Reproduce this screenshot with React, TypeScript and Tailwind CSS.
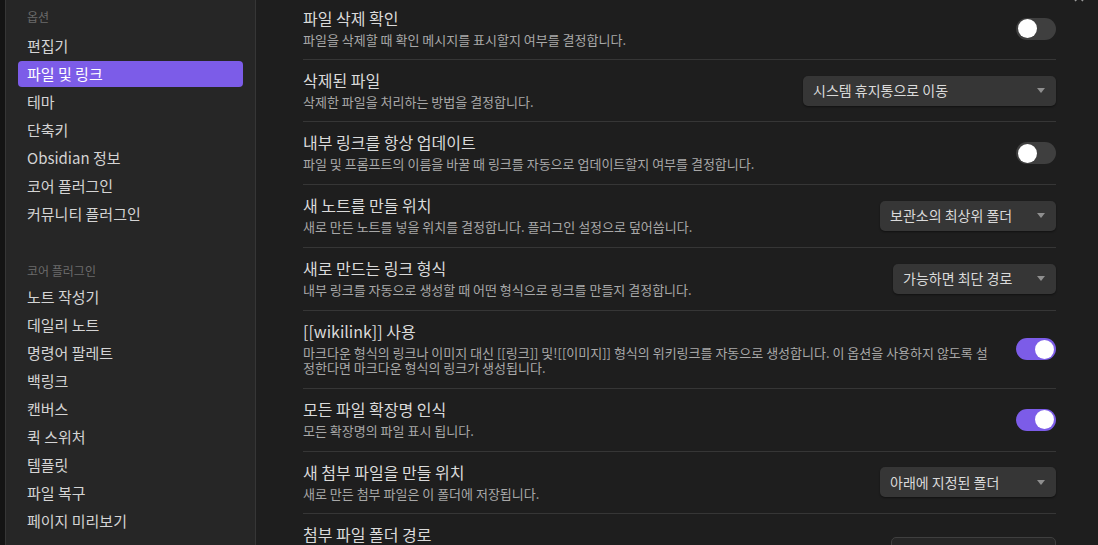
import type { ReactNode } from "react"

const font = { fontFamily: '"Noto Sans CJK KR", "Inter", sans-serif' }

const optionItems = ["편집기", "파일 및 링크", "테마", "단축키", "Obsidian 정보", "코어 플러그인", "커뮤니티 플러그인"]
const coreItems = ["노트 작성기", "데일리 노트", "명령어 팔레트", "백링크", "캔버스", "퀵 스위처", "템플릿", "파일 복구", "페이지 미리보기"]

function NavItem({ label, active }: { label: string; active?: boolean }) {
  return (
    <div
      className={
        active
          ? "h-[26px] mb-[2px] px-[9px] flex items-center rounded-[4px] bg-[#7c5ce8] text-white text-[15px]"
          : "h-[26px] mb-[2px] px-[9px] flex items-center rounded-[4px] text-[#d4d4d4] text-[15px]"
      }
    >
      {label}
    </div>
  )
}

function Toggle({ on }: { on?: boolean }) {
  return (
    <div
      className={
        on
          ? "w-[40px] h-[22px] rounded-full bg-[#7c5ce8] flex items-center justify-end px-[2px]"
          : "w-[40px] h-[22px] rounded-full bg-[#3f3f3f] flex items-center justify-start px-[2px]"
      }
    >
      <div className="w-[19px] h-[19px] rounded-full bg-white" />
    </div>
  )
}

function Dropdown({ label, width }: { label: string; width: string }) {
  return (
    <div
      className={`${width} h-[30px] rounded-[5px] bg-[#363636] shadow-[0_1px_2px_rgba(0,0,0,0.45)] flex items-center justify-between pl-[10px] pr-[11px] text-[14px] text-[#dadada]`}
    >
      <span>{label}</span>
      <svg width="8" height="5" viewBox="0 0 8 5">
        <path d="M0 0 L8 0 L4 5 Z" fill="#8f8f8f" />
      </svg>
    </div>
  )
}

function Row({ title, desc, first, children }: { title: string; desc: ReactNode; first?: boolean; children: ReactNode }) {
  return (
    <div
      className={
        first
          ? "flex items-center pt-[8px] pb-[11px]"
          : "flex items-center border-t border-[#363636] pt-[10px] pb-[12px]"
      }
    >
      <div className="flex-1 min-w-0 pr-[20px]">
        <div className="text-[16px] leading-[20px] text-[#dadada]">{title}</div>
        <div className="mt-[4px] text-[13px] leading-[15.7px] text-[#a8a8a8]">{desc}</div>
      </div>
      <div className="shrink-0 flex justify-end pt-[2px]">{children}</div>
    </div>
  )
}

export default function App() {
  return (
    <div className="relative flex h-[545px] w-[1098px] overflow-hidden bg-[#1e1e1e]" style={font}>
      <div className="w-[5px] shrink-0 bg-[#141414]" />

      <aside className="w-[251px] shrink-0 bg-[#262626] border-l border-r border-[#363636] px-[12px] pt-[7px]">
        <div className="h-[20px] leading-[20px] mb-[6px] px-[9px] text-[12px] text-[#6b6b6b]">옵션</div>
        {optionItems.map((item) => (
          <NavItem key={item} label={item} active={item === "파일 및 링크"} />
        ))}
        <div className="h-[20px] leading-[20px] mt-[34px] mb-[3px] px-[9px] text-[12px] text-[#6b6b6b]">코어 플러그인</div>
        {coreItems.map((item) => (
          <NavItem key={item} label={item} />
        ))}
      </aside>

      <main className="flex-1 min-w-0 pl-[47px] pr-[42px]">
        <Row first title="파일 삭제 확인" desc="파일을 삭제할 때 확인 메시지를 표시할지 여부를 결정합니다.">
          <Toggle />
        </Row>
        <Row title="삭제된 파일" desc="삭제한 파일을 처리하는 방법을 결정합니다.">
          <Dropdown label="시스템 휴지통으로 이동" width="w-[253px]" />
        </Row>
        <Row title="내부 링크를 항상 업데이트" desc="파일 및 프롬프트의 이름을 바꿀 때 링크를 자동으로 업데이트할지 여부를 결정합니다.">
          <Toggle />
        </Row>
        <Row title="새 노트를 만들 위치" desc="새로 만든 노트를 넣을 위치를 결정합니다. 플러그인 설정으로 덮어씁니다.">
          <Dropdown label="보관소의 최상위 폴더" width="w-[176px]" />
        </Row>
        <Row title="새로 만드는 링크 형식" desc="내부 링크를 자동으로 생성할 때 어떤 형식으로 링크를 만들지 결정합니다.">
          <Dropdown label="가능하면 최단 경로" width="w-[163px]" />
        </Row>
        <Row
          title="[[wikilink]] 사용"
          desc="마크다운 형식의 링크나 이미지 대신 [[링크]] 및![[이미지]] 형식의 위키링크를 자동으로 생성합니다. 이 옵션을 사용하지 않도록 설정한다면 마크다운 형식의 링크가 생성됩니다."
        >
          <Toggle on />
        </Row>
        <Row title="모든 파일 확장명 인식" desc="모든 확장명의 파일 표시 됩니다.">
          <Toggle on />
        </Row>
        <Row title="새 첨부 파일을 만들 위치" desc="새로 만든 첨부 파일은 이 폴더에 저장됩니다.">
          <Dropdown label="아래에 지정된 폴더" width="w-[176px]" />
        </Row>
        <Row title="첨부 파일 폴더 경로" desc={<div className="h-[31px]" />}>
          <div className="w-[165px] h-[30px] rounded-[5px] bg-[#262626] border border-[#3f3f3f] -mt-[2px]" />
        </Row>
      </main>

      <svg className="absolute top-[-9px] left-[1073px]" width="12" height="12" viewBox="0 0 12 12">
        <path d="M2 2 L10 10 M10 2 L2 10" stroke="#9a9a9a" strokeWidth="1.5" />
      </svg>
    </div>
  )
}
